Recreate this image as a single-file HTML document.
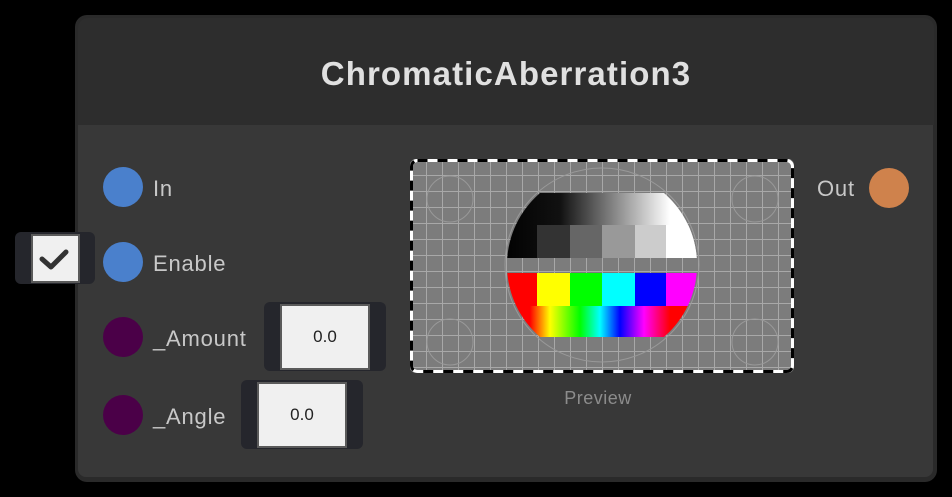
<!DOCTYPE html>
<html><head><meta charset="utf-8"><style>
html,body{margin:0;padding:0;background:#000;width:952px;height:497px;overflow:hidden;font-family:"Liberation Sans",sans-serif}
.node{position:absolute;left:75px;top:15px;width:862px;height:467px;background:#2a2a2a;border-radius:12px}
.hdr{position:absolute;left:3px;top:3px;width:856px;height:107px;background:#2d2d2d;border-radius:10px 10px 0 0}
.body{position:absolute;left:3px;top:110px;width:855px;height:352px;background:#383838;border-radius:0 0 8px 8px}
.title{position:absolute;left:75px;width:862px;top:55px;text-align:center;color:#e0e0e0;font-size:33px;font-weight:bold;letter-spacing:1.1px}
.dot{position:absolute;width:40px;height:40px;border-radius:50%}
.lbl{position:absolute;color:#c8c8c8;font-size:22px;letter-spacing:0.8px}
.fo{position:absolute;background:#25262c;border-radius:6px}
.fi{position:absolute;background:#f0f0f0;border:2px solid #5a5a5a;box-sizing:border-box;text-align:center;font-size:17px;color:#222}
</style></head><body>
<div class="node"><div class="hdr"></div><div class="body"></div></div>
<div class="title">ChromaticAberration3</div>

<div class="dot" style="left:103px;top:167px;background:#4a80cc"></div>
<div class="lbl" style="left:153px;top:176px">In</div>
<div class="dot" style="left:103px;top:242px;background:#4a80cc"></div>
<div class="lbl" style="left:153px;top:251px">Enable</div>
<div class="dot" style="left:103px;top:317px;background:#4b0048"></div>
<div class="lbl" style="left:153px;top:326px">_Amount</div>
<div class="dot" style="left:103px;top:395px;background:#4b0048"></div>
<div class="lbl" style="left:153px;top:404px">_Angle</div>

<div class="fo" style="left:15px;top:232px;width:80px;height:52px"></div>
<div class="fi" style="left:31px;top:234px;width:49px;height:49px">
<svg width="45" height="45" viewBox="0 0 45 45"><path d="M9 23 L18 31 L33 16" fill="none" stroke="#333" stroke-width="5" stroke-linecap="round" stroke-linejoin="round"/></svg></div>

<div class="fo" style="left:264px;top:302px;width:122px;height:69px"></div>
<div class="fi" style="left:280px;top:304px;width:90px;height:66px;line-height:62px">0.0</div>
<div class="fo" style="left:241px;top:380px;width:122px;height:69px"></div>
<div class="fi" style="left:257px;top:382px;width:90px;height:66px;line-height:62px">0.0</div>

<div class="lbl" style="left:817px;top:176px">Out</div>
<div class="dot" style="left:869px;top:168px;background:#cf824c"></div>

<svg style="position:absolute;left:410px;top:159px" width="384" height="214" viewBox="0 0 384 214">
<defs>
<clipPath id="c"><circle cx="192" cy="106" r="95"/></clipPath>
<clipPath id="r"><rect x="0" y="0" width="384" height="214" rx="6"/></clipPath>
<linearGradient id="g" x1="0" x2="1"><stop offset="0" stop-color="#000"/><stop offset="0.3" stop-color="#111"/><stop offset="0.85" stop-color="#fff"/></linearGradient>
<linearGradient id="rb" x1="0" x2="1"><stop offset="0.15" stop-color="#f00"/><stop offset="0.25" stop-color="#ff0"/><stop offset="0.4" stop-color="#0f0"/><stop offset="0.5" stop-color="#0ff"/><stop offset="0.6" stop-color="#00f"/><stop offset="0.72" stop-color="#f0f"/><stop offset="0.85" stop-color="#f00"/></linearGradient>
<pattern id="grid" width="16" height="16" patternUnits="userSpaceOnUse"><path d="M0 0H16M0 0V16" stroke="#a8a8a8" stroke-width="2"/></pattern>
</defs>
<g clip-path="url(#r)">
<rect width="384" height="214" fill="#7c7c7c"/>
<rect width="384" height="214" fill="url(#grid)"/>
<circle cx="192" cy="106" r="97" fill="none" stroke="#999" stroke-width="1"/>
<circle cx="40" cy="40" r="23" fill="none" stroke="#999"/><circle cx="345" cy="40" r="23" fill="none" stroke="#999"/>
<circle cx="40" cy="183" r="23" fill="none" stroke="#999"/><circle cx="345" cy="183" r="23" fill="none" stroke="#999"/>
<g clip-path="url(#c)">
<rect x="90" y="34" width="200" height="65" fill="url(#g)"/>
<rect x="127" y="66" width="33" height="33" fill="#333"/><rect x="160" y="66" width="32" height="33" fill="#666"/><rect x="192" y="66" width="33" height="33" fill="#999"/><rect x="225" y="66" width="31" height="33" fill="#ccc"/><rect x="256" y="66" width="40" height="33" fill="#fff"/>
<rect x="90" y="114" width="37" height="33" fill="#f00"/><rect x="127" y="114" width="33" height="33" fill="#ff0"/><rect x="160" y="114" width="32" height="33" fill="#0f0"/><rect x="192" y="114" width="33" height="33" fill="#0ff"/><rect x="225" y="114" width="31" height="33" fill="#00f"/><rect x="256" y="114" width="40" height="33" fill="#f0f"/>
<rect x="90" y="147" width="200" height="31" fill="url(#rb)"/>
</g>
<rect x="1.5" y="1.5" width="381" height="211" rx="6" fill="none" stroke="#fff" stroke-width="3"/>
<rect x="1.5" y="1.5" width="381" height="211" rx="6" fill="none" stroke="#000" stroke-width="3" stroke-dasharray="10 10"/>
</g></svg>
<div style="position:absolute;left:530px;width:136px;top:388px;text-align:center;color:#8c8c8c;font-size:18px;letter-spacing:0.5px">Preview</div>
</body></html>
